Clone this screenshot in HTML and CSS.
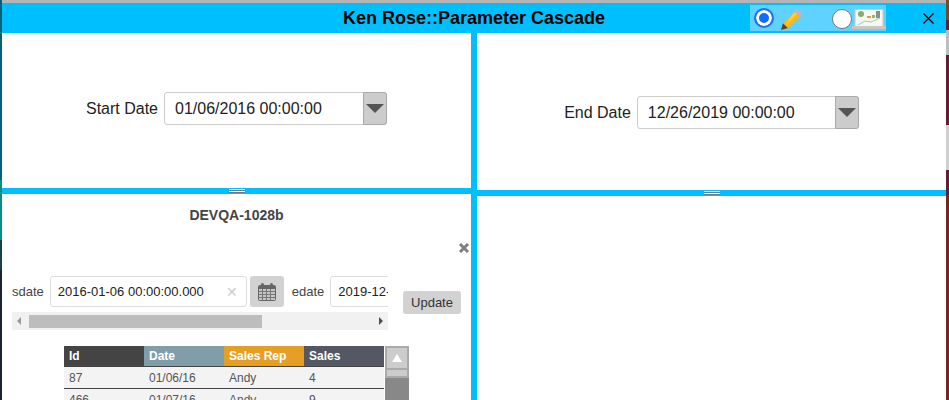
FILE: index.html
```html
<!DOCTYPE html>
<html lang="en">
<head>
  <meta charset="UTF-8" />
  <title>Ken Rose::Parameter Cascade</title>
  <link rel="stylesheet" href="styles.css">
</head>
<body>
  <div class="borde-izq"></div>
  <div class="ventana">
    <div class="franja"></div>
    <header class="barra">
      <h1>Ken Rose::Parameter Cascade</h1>
      <div class="modos">
        <span class="radio radio-on"></span>
        <svg class="icono-lapiz" width="21" height="21" viewBox="0 0 21 21">
          <path d="M0 21 L2 14 L7 19 Z" fill="#6e3f16"/>
          <path d="M2 14 L14 3 L19 8 L7 19 Z" fill="#f9b912"/>
          <path d="M9 9 L14 3 L16 5 L5 16 Z" fill="#fdd04a"/>
          <path d="M14 3 L16 1 L21 5 L19 8 Z" fill="#eda3a3"/>
        </svg>
        <span class="radio radio-off"></span>
        <svg class="icono-tablero" width="34" height="20" viewBox="0 0 34 20">
          <rect x="3" y="0.5" width="28" height="17" fill="#f7f7f2" stroke="#c9c9c2"/>
          <rect x="0" y="17" width="34" height="3" fill="#c8c8c0"/>
          <circle cx="9" cy="5" r="3" fill="#8aa86c"/>
          <rect x="15" y="7" width="4" height="2" fill="#d9a13a"/>
          <rect x="20" y="6" width="3" height="3" fill="#9ab56a"/>
          <rect x="24" y="2" width="4" height="7" fill="#8d8d85"/>
          <path d="M6 16 L13 12 L19 13 L28 9" fill="none" stroke="#8fd0c0"/>
        </svg>
      </div>
      <svg class="cerrar" width="11" height="11" viewBox="0 0 11 11">
        <path d="M0.5 0.5 L10.5 10.5 M10.5 0.5 L0.5 10.5" stroke="#000" stroke-width="1.2" fill="none"/>
      </svg>
    </header>

    <div class="paneles">
      <div class="columna">
        <section class="panel panel-sup">
          <div class="campo-fecha campo-inicio">
            <label>Start Date</label>
            <div class="combo"><span>01/06/2016 00:00:00</span><button class="flecha"></button></div>
          </div>
        </section>
        <div class="divisor"><span class="asa"></span></div>
        <section class="panel panel-inf">
          <h2>DEVQA-1028b</h2>
          <svg class="quitar" width="10" height="10" viewBox="0 0 10 10">
            <path d="M1 1 L9 9 M9 1 L1 9" stroke="#808080" stroke-width="3" fill="none"/>
          </svg>
          <div class="filtros">
            <div class="filtros-fila">
              <div class="filtros-scroll">
                <label>sdate</label>
                <div class="entrada"><span>2016-01-06 00:00:00.000</span><i>✕</i></div>
                <button class="calendario">
                  <svg width="18" height="18" viewBox="0 0 18 18">
                    <rect x="0.5" y="2.5" width="17" height="15" rx="1" fill="#c6c6c6" stroke="#666"/>
                    <rect x="1" y="3" width="16" height="3" fill="#666"/>
                    <path d="M1 8.5h16M1 11.5h16M1 14.5h16M4.5 6v11M8.5 6v11M12.5 6v11" stroke="#777" fill="none"/>
                    <rect x="3" y="0" width="3" height="5" rx="1.5" fill="#666"/>
                    <rect x="12" y="0" width="3" height="5" rx="1.5" fill="#666"/>
                  </svg>
                </button>
                <label>edate</label>
                <div class="entrada entrada-fin"><span>2019-12-26 00:00:00.000</span></div>
              </div>
              <div class="barra-h">
                <span class="tri tri-izq"></span>
                <div class="carril"><div class="pulgar"></div></div>
                <span class="tri tri-der"></span>
              </div>
            </div>
            <button class="actualizar">Update</button>
          </div>

          <div class="tabla-caja">
            <table class="tabla">
              <thead>
                <tr><th class="c-id">Id</th><th class="c-fecha">Date</th><th class="c-rep">Sales Rep</th><th class="c-ventas">Sales</th></tr>
              </thead>
              <tbody>
                <tr><td>87</td><td>01/06/16</td><td>Andy</td><td>4</td></tr>
                <tr><td>466</td><td>01/07/16</td><td>Andy</td><td>9</td></tr>
              </tbody>
            </table>
            <div class="barra-v">
              <div class="boton-v"><span></span></div>
              <div class="pulgar-v"></div>
              <div class="resto-v"></div>
            </div>
          </div>
        </section>
      </div>

      <div class="columna">
        <section class="panel panel-sup panel-alto">
          <div class="campo-fecha campo-fin">
            <label>End Date</label>
            <div class="combo"><span>12/26/2019 00:00:00</span><button class="flecha"></button></div>
          </div>
        </section>
        <div class="divisor"><span class="asa"></span></div>
        <section class="panel panel-inf"></section>
      </div>
    </div>
  </div>
  <div class="borde-der"></div>
</body>
</html>
```

FILE: styles.css
```css
html, body {
  margin: 0;
  height: 400px;
  overflow: hidden;
}

body {
  font-family: "Liberation Sans", Arial, sans-serif;
  display: flex;
  background: #1c2233;
}

.borde-izq {
  width: 2px;
  flex: none;
  background: linear-gradient(#05607a 0 180px, #0a8a8a 180px 240px, #17404a 240px 270px, #1c2233 270px);
}

.borde-der {
  width: 3px;
  flex: none;
  background: linear-gradient(#7a4a20 0 20px, #6b1a35 20px 30px, #bdbdbd 30px 55px, #6b1a35 55px 125px, #cfcfcf 125px 170px, #6b1a35 170px 195px, #7a2420 195px);
}

.ventana {
  width: 944px;
  height: 400px;
  flex: none;
  overflow: hidden;
}

.franja {
  height: 3px;
  background: #b5b5b5;
}

.barra {
  height: 30px;
  background: #00bfff;
  display: flex;
  align-items: center;
  position: relative;
}

.barra h1 {
  margin: 0;
  width: 100%;
  text-align: center;
  font-size: 18px;
  color: #000;
}

.modos {
  position: absolute;
  left: 748px;
  top: 2px;
  width: 136px;
  height: 26px;
  background: #5fd2ff;
  display: flex;
  align-items: center;
  padding-left: 4px;
  box-sizing: border-box;
}

.radio {
  width: 20px;
  height: 20px;
  border-radius: 50%;
  box-sizing: border-box;
  background: #fff;
  flex: none;
}

.radio-on {
  border: 2px solid #1a73f5;
  box-shadow: inset 0 0 0 3px #fff;
  background: #0d6efd;
}

.radio-off {
  border: 1px solid #777;
  margin-left: 30px;
  margin-top: 2px;
}

.icono-lapiz {
  margin-left: 7px;
  margin-top: 2px;
}

.icono-tablero {
  margin-left: 0;
  margin-top: 1px;
}

.cerrar {
  position: absolute;
  left: 921px;
  top: 10px;
}

.paneles {
  display: flex;
  gap: 6px;
  background: #00bfff;
  height: 367px;
}

.columna {
  width: 469px;
  display: flex;
  flex-direction: column;
}

.panel {
  background: #fff;
  position: relative;
  overflow: hidden;
}

.panel-sup {
  height: 155px;
  flex: none;
  display: flex;
  align-items: center;
  justify-content: center;
}

.panel-alto {
  height: 157px;
}

.panel-inf {
  flex: 1;
}

.divisor {
  height: 6px;
  flex: none;
  display: flex;
  align-items: center;
  justify-content: center;
}

.asa {
  width: 16px;
  height: 4px;
  background: linear-gradient(#fff 0 1px, #5f7f8c 1px 2px, #fff 2px 3px, #5f7f8c 3px);
}

.campo-fecha {
  display: flex;
  align-items: center;
  gap: 6px;
  font-size: 16px;
  color: #222;
}

.campo-inicio {
  margin-bottom: 4px;
}

.campo-fin {
  margin-top: 2px;
}

.combo {
  width: 223px;
  height: 33px;
  border: 1px solid #ccc;
  border-radius: 3px;
  box-sizing: border-box;
  display: flex;
  align-items: center;
  background: #fff;
}

.campo-fin .combo {
  width: 222px;
}

.combo span {
  flex: 1;
  padding-left: 10px;
}

.flecha {
  width: 24px;
  height: 33px;
  margin: -1px;
  background: #ccc;
  border: 1px solid #aaa;
  border-radius: 0 3px 3px 0;
  position: relative;
}

.flecha::after {
  content: "";
  position: absolute;
  left: 2px;
  top: 11px;
  border-left: 9px solid transparent;
  border-right: 9px solid transparent;
  border-top: 9px solid #555;
}

.panel-inf h2 {
  margin: 13px 0 0;
  text-align: center;
  font-size: 14px;
  color: #444;
}

.quitar {
  position: absolute;
  right: 2px;
  top: 49px;
}

.filtros {
  display: flex;
  margin-top: 53px;
  padding-left: 10px;
}

.filtros-fila {
  width: 376px;
  flex: none;
}

.filtros-scroll {
  display: flex;
  align-items: center;
  overflow: hidden;
  height: 31px;
  font-size: 13px;
  color: #444;
  white-space: nowrap;
}

.entrada {
  width: 197px;
  height: 31px;
  margin-left: 6px;
  border: 1px solid #ddd;
  border-radius: 3px;
  box-sizing: border-box;
  display: flex;
  align-items: center;
  justify-content: space-between;
  padding: 0 8px 0 7px;
  color: #222;
  flex: none;
  background: #fff;
}

.entrada i {
  font-style: normal;
  color: #ccc;
  font-size: 14px;
}

.calendario {
  width: 34px;
  height: 31px;
  margin: 0 8px 0 3px;
  background: #d2d2d2;
  border: none;
  border-radius: 3px;
  padding: 0;
  flex: none;
}

.calendario svg {
  display: block;
  margin: 0 auto;
}

.barra-h {
  height: 18px;
  margin-top: 5px;
  background: #f1f1f1;
  display: flex;
  align-items: center;
  justify-content: space-between;
}

.carril {
  flex: 1;
  margin-left: 8px;
}

.pulgar {
  width: 233px;
  height: 13px;
  background: #bdbdbd;
}

.tri {
  width: 0;
  height: 0;
  border-top: 4px solid transparent;
  border-bottom: 4px solid transparent;
}

.tri-izq {
  margin-left: 5px;
  border-right: 4px solid #999;
}

.tri-der {
  margin-right: 5px;
  border-left: 4px solid #505050;
}

.actualizar {
  align-self: flex-start;
  margin: 15px 0 0 15px;
  width: 58px;
  height: 23px;
  background: #d2d2d2;
  border: none;
  border-radius: 3px;
  font-family: inherit;
  font-size: 13px;
  color: #333;
  padding: 0;
}

.tabla-caja {
  display: flex;
  margin: 16px 0 0 62px;
}

.tabla {
  width: 320px;
  height: fit-content;
  border-collapse: separate;
  border-spacing: 0;
  table-layout: fixed;
  font-size: 12px;
}

.tabla th {
  height: 20px;
  padding: 0 5px;
  text-align: left;
  color: #fff;
  font-size: 12px;
  border-bottom: 1px solid #444;
}

.tabla td {
  height: 21px;
  padding: 0 5px;
  background: #f3f3f3;
  color: #555;
  border-bottom: 1px solid #444;
}

.c-id { background: #444; }
.c-fecha { background: #7f9ea9; }
.c-rep { background: #e69f25; }
.c-ventas { background: #545863; }

.barra-v {
  width: 24px;
  margin-left: 1px;
  background: #aaa;
  height: 60px;
  flex: none;
}

.boton-v {
  width: 20px;
  height: 20px;
  margin: 2px;
  background: #ccc;
  position: relative;
}

.boton-v span {
  position: absolute;
  left: 5px;
  top: 6px;
  border-left: 5px solid transparent;
  border-right: 5px solid transparent;
  border-bottom: 8px solid #fff;
}

.pulgar-v {
  height: 6px;
  margin: 0 2px;
  background: #ccc;
}

.resto-v {
  height: 30px;
  margin-top: 2px;
  background: #888;
}
```
